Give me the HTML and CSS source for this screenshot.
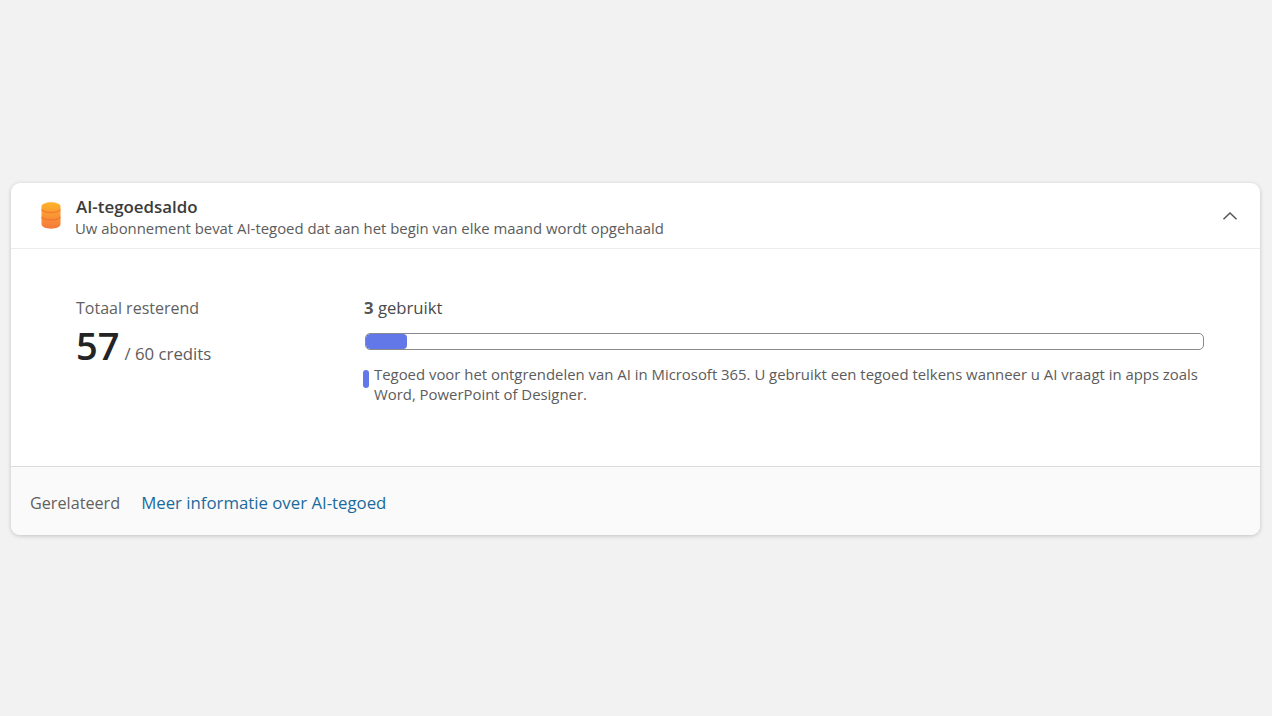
FILE: index.html
```html
<!DOCTYPE html>
<html lang="nl">
<head>
<meta charset="utf-8">
<title>AI-tegoedsaldo</title>
<link rel="stylesheet" href="styles.css">
</head>
<body>
<section class="card">
  <header class="head">
    <svg class="coin" width="22" height="27" viewBox="0 0 22 27" aria-hidden="true">
      <defs>
        <linearGradient id="g" x1="0" y1="0" x2="0" y2="1">
          <stop offset="0" stop-color="#ffb32a"/>
          <stop offset="1" stop-color="#f5793c"/>
        </linearGradient>
      </defs>
      <path d="M1.500 4.500C1.500 1.900 5.800.3 11 .3s9.500 1.600 9.500 4.200v17.500c0 2.800-4.300 4.700-9.500 4.700s-9.500-1.900-9.500-4.700z" fill="url(#g)"/>
      <path d="M1.500 7.500c1.500 1.900 5.200 3 9.500 3s8-1.100 9.500-3M1.500 15c1.500 1.900 5.200 3 9.500 3s8-1.100 9.500-3" fill="none" stroke="#ee6a38" stroke-opacity=".6" stroke-width="1.500"/>
    </svg>
    <div class="head-text">
      <h1 class="title">AI-tegoedsaldo</h1>
      <p class="sub">Uw abonnement bevat AI-tegoed dat aan het begin van elke maand wordt opgehaald</p>
    </div>
    <svg class="chev" width="16" height="10" viewBox="0 0 16 10" aria-hidden="true"><path d="M1.500 8.200 8 2l6.500 6.200" fill="none" stroke="#555" stroke-width="1.500"/></svg>
  </header>
  <div class="body">
    <div class="total">
      <div class="total-label">Totaal resterend</div>
      <div class="total-val"><span class="big">57</span><span class="of">/ 60 credits</span></div>
    </div>
    <div class="usage">
      <div class="used"><b>3</b> gebruikt</div>
      <div class="track"><div class="fill"></div></div>
      <div class="legend">
        <span class="mark"></span>
        <p class="desc">Tegoed voor het ontgrendelen van AI in Microsoft 365. U gebruikt een tegoed telkens wanneer u AI vraagt in apps zoals Word, PowerPoint of Designer.</p>
      </div>
    </div>
  </div>
  <footer class="foot">
    <span class="rel">Gerelateerd</span>
    <a class="link" href="#">Meer informatie over AI-tegoed</a>
  </footer>
</section>
</body>
</html>
```
FILE: styles.css
```css
* { box-sizing: border-box; }
html, body { height: 100%; }
body {
  margin: 0;
  background: #f2f2f2;
  font-family: "Open Sans", "Noto Sans", sans-serif;
  color: #555;
  padding: 183px 12px 0 11px;
}
.card {
  height: 352px;
  background: #fff;
  border-radius: 9px;
  box-shadow: 0 1px 4px rgba(0,0,0,.2);
  display: flex;
  flex-direction: column;
  overflow: hidden;
}
.head {
  height: 66px;
  flex: none;
  display: flex;
  align-items: center;
  padding: 0 22px 0 29px;
  border-bottom: 1px solid #ececec;
}
.coin { flex: none; margin: 0 14px 1px 0; }
.head-text { flex: 1; padding-top: 2px; }
.title {
  margin: 0;
  font-size: 16.900px;
  line-height: 20px;
  font-weight: 600;
  color: #3b3b3b;
}
.sub { margin: 2px 0 0 -1px; font-size: 14.900px; line-height: 18px; color: #5c5c5c; }
.chev { flex: none; }
.body {
  flex: 1;
  display: flex;
  padding: 48px 56px 0 65px;
}
.total { width: 288px; flex: none; }
.total-label { font-size: 16px; line-height: 22px; color: #616161; }
.total-val { display: flex; align-items: baseline; margin-top: 1px; }
.big { font-size: 38px; line-height: 50px; font-weight: 600; color: #242424; margin-right: 5px; }
.of { font-size: 16.800px; color: #5c5c5c; }
.usage { flex: 1; }
.used { font-size: 16.700px; line-height: 22px; color: #4a4a4a; }
.used b { font-weight: 700; color: #555; }
.track {
  margin: 14px 0 0 1px;
  height: 17px;
  border: 1px solid #8a8a8a;
  border-radius: 5px;
  overflow: hidden;
  background: #fff;
}
.fill { width: 4.900%; height: 100%; background: #6278e8; border-radius: 4px; }
.legend { display: flex; gap: 5px; margin: 14px 0 0 -1px; align-items: flex-start; }
.mark { width: 6px; height: 18px; margin-top: 6px; border-radius: 3px; background: #6278e8; flex: none; }
.desc { margin: 0; font-size: 14.900px; line-height: 20px; color: #5c5c5c; }
.foot {
  height: 69px;
  flex: none;
  background: #fafafa;
  border-top: 1px solid #dcdcdc;
  display: flex;
  align-items: baseline;
  padding: 24px 0 0 19px;
  gap: 21px;
  font-size: 16.800px;
}
.rel { color: #616161; font-size: 16.200px; }
.link { color: #1a6a9c; text-decoration: none; }
```
